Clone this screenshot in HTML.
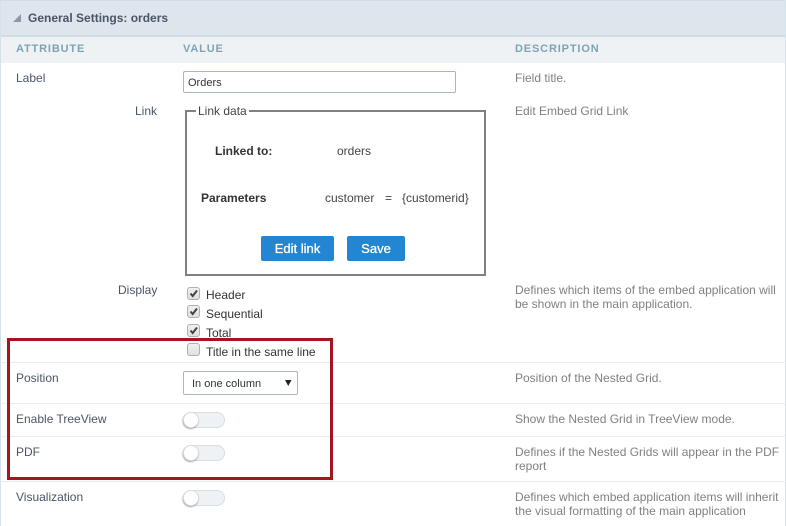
<!DOCTYPE html>
<html>
<head>
<meta charset="utf-8">
<style>
html,body{margin:0;padding:0;background:#fff}
#p{position:relative;width:786px;height:526px;overflow:hidden;background:#fff;font-family:"Liberation Sans",Arial,sans-serif;font-size:12px;color:#4a5568}
#p div{position:absolute;white-space:nowrap}
.t{line-height:14px}
.h{font-size:11px;font-weight:bold;letter-spacing:.85px;color:#7fa3b3;line-height:14px;top:42px}
.d{color:#808080;line-height:14px;left:515px}
.l{color:#4a5568;line-height:14px}
.k{color:#333;line-height:14px;left:206px}
.rule{left:0;width:786px;height:1px;background:#e9eef4}
.cb{left:187px;width:11px;height:11px;border:1px solid #b0b0b0;border-radius:3px;background:linear-gradient(#f0f0f0,#e0e0e0)}
.cb svg{position:absolute;left:0;top:0}
.sw{left:183px;width:40px;height:14px;border:1px solid #d5dfe5;border-radius:8px;background:#eef2f5}
.kn{left:183px;width:14px;height:14px;border-radius:50%;background:#fff;border:1px solid #dcdcdc;box-shadow:-.5px 1px 1.5px rgba(0,0,0,.35)}
.btn{height:25px;line-height:25px;background:#2286d2;color:#fff;font-size:13px;-webkit-text-stroke:.3px #fff;text-align:center;border-radius:2px;top:236px}
</style>
</head>
<body>
<div id="p">
<div style="left:0;top:0;width:786px;height:36px;background:#dfe5ed"></div>
<div style="left:0;top:0;width:786px;height:1px;background:#d0dde6"></div>
<div style="left:0;top:35px;width:786px;height:2px;background:#d0dde6"></div>
<div style="left:0;top:37px;width:786px;height:26px;background:#eef2f5"></div>
<div style="left:0;top:0;width:1px;height:526px;background:#d5e2ea"></div>
<div style="left:785px;top:0;width:1px;height:526px;background:#d5e2ea"></div>

<svg style="position:absolute;left:13px;top:14px" width="9" height="8"><polygon points="0,8 8,8 8,0" fill="#8e99a8"/></svg>
<div class="t" style="left:28px;top:11px;font-weight:bold;color:#4a5568">General Settings: orders</div>

<div class="h" style="left:16px">ATTRIBUTE</div>
<div class="h" style="left:183px">VALUE</div>
<div class="h" style="left:515px">DESCRIPTION</div>

<div class="l" style="left:16px;top:71px">Label</div>
<div style="left:183px;top:71px;width:271px;height:20px;border:1px solid #a9b4c6;border-radius:2px;background:#fff"></div>
<div style="left:188px;top:76px;line-height:14px;font-size:11px;color:#333">Orders</div>
<div class="d" style="top:71px">Field title.</div>

<div class="l" style="left:135px;top:104px">Link</div>
<div class="d" style="top:104px">Edit Embed Grid Link</div>
<div style="left:185px;top:110px;width:297px;height:162px;border:2px solid #808080"></div>
<div style="left:196px;top:104px;background:#fff;padding:0 2px;line-height:14px;color:#444">Link data</div>
<div class="t" style="left:215px;top:144px;font-weight:bold;color:#333">Linked to:</div>
<div class="t" style="left:337px;top:144px;color:#444">orders</div>
<div class="t" style="left:201px;top:191px;font-weight:bold;color:#333">Parameters</div>
<div class="t" style="left:325px;top:191px;color:#444">customer</div>
<div class="t" style="left:385px;top:191px;color:#444">=</div>
<div class="t" style="left:402px;top:191px;color:#444">{customerid}</div>
<div class="btn" style="left:261px;width:73px">Edit link</div>
<div class="btn" style="left:347px;width:58px">Save</div>

<div class="l" style="left:118px;top:283px">Display</div>
<div class="d" style="top:283px">Defines which items of the embed application will</div>
<div class="d" style="top:297px">be shown in the main application.</div>

<div class="cb" style="top:287px"><svg width="11" height="11"><path d="M2.5 5.5L4.7 8L9 2.5" fill="none" stroke="#444" stroke-width="2"/></svg></div>
<div class="k" style="top:288px">Header</div>
<div class="cb" style="top:305px"><svg width="11" height="11"><path d="M2.5 5.5L4.7 8L9 2.5" fill="none" stroke="#444" stroke-width="2"/></svg></div>
<div class="k" style="top:307px">Sequential</div>
<div class="cb" style="top:324px"><svg width="11" height="11"><path d="M2.5 5.5L4.7 8L9 2.5" fill="none" stroke="#444" stroke-width="2"/></svg></div>
<div class="k" style="top:326px">Total</div>
<div class="cb" style="top:343px"></div>
<div class="k" style="top:345px">Title in the same line</div>

<div class="rule" style="top:362px"></div>
<div class="l" style="left:16px;top:371px">Position</div>
<div style="left:183px;top:371px;width:113px;height:22px;border:1px solid #a9b4c6;border-radius:2px;background:#fff"></div>
<div style="left:192px;top:377px;line-height:14px;font-size:11px;color:#333">In one column</div>
<svg style="position:absolute;left:285px;top:380px" width="7" height="6"><polygon points="0,0 6.5,0 3.25,6" fill="#222"/></svg>
<div class="d" style="top:371px">Position of the Nested Grid.</div>

<div class="rule" style="top:403px"></div>
<div class="l" style="left:16px;top:412px">Enable TreeView</div>
<div class="sw" style="top:412px"></div><div class="kn" style="top:412px"></div>
<div class="d" style="top:412px">Show the Nested Grid in TreeView mode.</div>

<div class="rule" style="top:436px"></div>
<div class="l" style="left:16px;top:445px">PDF</div>
<div class="sw" style="top:445px"></div><div class="kn" style="top:445px"></div>
<div class="d" style="top:445px">Defines if the Nested Grids will appear in the PDF</div>
<div class="d" style="top:459px">report</div>

<div class="rule" style="top:481px"></div>
<div class="l" style="left:16px;top:490px">Visualization</div>
<div class="sw" style="top:490px"></div><div class="kn" style="top:490px"></div>
<div class="d" style="top:490px">Defines which embed application items will inherit</div>
<div class="d" style="top:504px">the visual formatting of the main application</div>

<div style="left:7px;top:338px;width:320px;height:136px;border:3px solid #a5151e"></div>
</div>
</body>
</html>
